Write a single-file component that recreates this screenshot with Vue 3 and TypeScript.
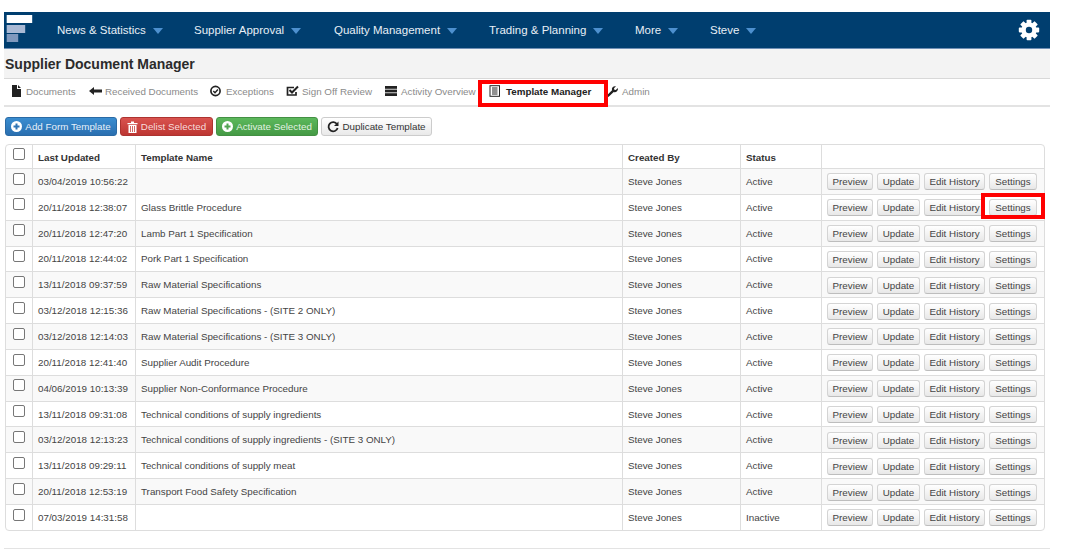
<script setup lang="ts">
const nav = [
  { label: 'News & Statistics', w: 137 },
  { label: 'Supplier Approval', w: 140 },
  { label: 'Quality Management', w: 155 },
  { label: 'Trading & Planning', w: 146 },
  { label: 'More', w: 75 },
  { label: 'Steve', w: 60 },
]
const tabs = [
  { id: 'doc', label: 'Documents', w: 79 },
  { id: 'back', label: 'Received Documents', w: 121 },
  { id: 'ok', label: 'Exceptions', w: 76 },
  { id: 'check', label: 'Sign Off Review', w: 99 },
  { id: 'server', label: 'Activity Overview', w: 104 },
  { id: 'list', label: 'Template Manager', w: 117, active: true },
  { id: 'wrench', label: 'Admin', w: 60 },
]
const rows = [
  ['03/04/2019 10:56:22', '', 'Active'],
  ['20/11/2018 12:38:07', 'Glass Brittle Procedure', 'Active'],
  ['20/11/2018 12:47:20', 'Lamb Part 1 Specification', 'Active'],
  ['20/11/2018 12:44:02', 'Pork Part 1 Specification', 'Active'],
  ['13/11/2018 09:37:59', 'Raw Material Specifications', 'Active'],
  ['03/12/2018 12:15:36', 'Raw Material Specifications - (SITE 2 ONLY)', 'Active'],
  ['03/12/2018 12:14:03', 'Raw Material Specifications - (SITE 3 ONLY)', 'Active'],
  ['20/11/2018 12:41:40', 'Supplier Audit Procedure', 'Active'],
  ['04/06/2019 10:13:39', 'Supplier Non-Conformance Procedure', 'Active'],
  ['13/11/2018 09:31:08', 'Technical conditions of supply ingredients', 'Active'],
  ['03/12/2018 12:13:23', 'Technical conditions of supply ingredients - (SITE 3 ONLY)', 'Active'],
  ['13/11/2018 09:29:11', 'Technical conditions of supply meat', 'Active'],
  ['20/11/2018 12:53:19', 'Transport Food Safety Specification', 'Active'],
  ['07/03/2019 14:31:58', '', 'Inactive'],
]
const actions = ['Preview', 'Update', 'Edit History', 'Settings']
const teeth = [0, 45, 90, 135, 180, 225, 270, 315]
</script>

<template>
  <div class="page">
    <header class="nav">
      <svg class="logo" width="28" height="30" viewBox="0 0 28 30">
        <rect x="1.700" y="3" width="25.500" height="8" fill="#ffffff" />
        <rect x="1.700" y="13" width="18.500" height="8" fill="#a9b9d4" />
        <rect x="1.700" y="22" width="11.500" height="8" fill="#7f98bd" />
      </svg>
      <div class="nav-items">
        <div v-for="n in nav" :key="n.label" class="nav-item" :style="{ width: n.w + 'px' }">
          <span>{{ n.label }}</span><i class="caret"></i>
        </div>
      </div>
      <svg class="gear" width="22" height="22" viewBox="0 0 22 22">
        <rect v-for="t in teeth" :key="t" x="8.600" y="0.800" width="4.800" height="5" rx="0.800" fill="#fff" :transform="`rotate(${t} 11 11)`" />
        <circle cx="11" cy="11" r="7.600" fill="#fff" />
        <circle cx="11" cy="11" r="3.200" fill="#003e6f" />
      </svg>
    </header>

    <div class="title-bar"><h1>Supplier Document Manager</h1></div>

    <nav class="tabs">
      <div v-for="t in tabs" :key="t.id" class="tab" :class="{ active: t.active }" :style="{ width: t.w + 'px' }">
        <svg class="tab-icon" width="13" height="12" viewBox="0 0 13 12">
          <template v-if="t.id === 'doc'">
            <path d="M2 0h5v4h4v8H2z M8 0l3 3H8z" fill="#222" />
          </template>
          <template v-else-if="t.id === 'back'">
            <path d="M0 6l5-4v2.500h8v3H5V10z" fill="#222" />
          </template>
          <template v-else-if="t.id === 'ok'">
            <circle cx="5.500" cy="6" r="4.600" fill="none" stroke="#222" stroke-width="1.700" />
            <path d="M3.300 6l1.700 1.700L7.900 4.600" fill="none" stroke="#222" stroke-width="1.500" />
          </template>
          <template v-else-if="t.id === 'check'">
            <path d="M10 7v3H1.500V2.500H8" fill="none" stroke="#222" stroke-width="1.700" />
            <path d="M3.500 5l2.500 2.500L12 1.500" fill="none" stroke="#222" stroke-width="2" />
          </template>
          <template v-else-if="t.id === 'server'">
            <rect x="0" y="1" width="12" height="2.800" fill="#222" />
            <rect x="0" y="4.600" width="12" height="2.800" fill="#222" />
            <rect x="0" y="8.200" width="12" height="2.800" fill="#222" />
          </template>
          <template v-else-if="t.id === 'list'">
            <rect x="1" y="0.700" width="9.500" height="10.600" fill="none" stroke="#222" />
            <path d="M3 3h5.500M3 5h5.500M3 7h5.500M3 9h5.500" stroke="#222" />
          </template>
          <template v-else>
            <path d="M0.800 10.500L6 5.300a3.200 3.200 0 0 1 4-4L8 3.200l.3 1.500 1.500.3 2-2a3.200 3.200 0 0 1-4.100 4L2.400 12z" fill="#222" />
          </template>
        </svg>
        <span>{{ t.label }}</span>
      </div>
      <div class="hl hl-tab"></div>
    </nav>

    <div class="toolbar">
      <button class="tb blue">
        <svg width="11" height="11" viewBox="0 0 11 11"><circle cx="5.500" cy="5.500" r="5.500" fill="#fff" /><path d="M5.500 2.500v6M2.500 5.500h6" stroke="#2e74b5" stroke-width="2" /></svg>
        Add Form Template
      </button>
      <button class="tb red">
        <svg width="11" height="12" viewBox="0 0 11 12"><path d="M0.500 2h10v1.300h-10zM4 0.500h3V2H4zM1.500 4h8v8h-8z" fill="#fff" /><path d="M3.500 5v6M5.500 5v6M7.500 5v6" stroke="#c9423f" stroke-width="0.800" /></svg>
        Delist Selected
      </button>
      <button class="tb green">
        <svg width="11" height="11" viewBox="0 0 11 11"><circle cx="5.500" cy="5.500" r="5.500" fill="#fff" /><path d="M5.500 2.500v6M2.500 5.500h6" stroke="#51a351" stroke-width="2" /></svg>
        Activate Selected
      </button>
      <button class="tb plain">
        <svg width="12" height="12" viewBox="0 0 12 12"><path d="M10 3.200A4.600 4.600 0 1 0 10.600 7" fill="none" stroke="#222" stroke-width="1.800" /><path d="M11.500 0.500v4.500H7z" fill="#222" /></svg>
        Duplicate Template
      </button>
    </div>

    <div class="table-wrap">
      <table>
        <colgroup>
          <col style="width: 26px" /><col style="width: 103px" /><col style="width: 487px" />
          <col style="width: 118px" /><col style="width: 81px" /><col />
        </colgroup>
        <thead>
          <tr>
            <th><span class="cb"></span></th>
            <th>Last Updated</th><th>Template Name</th><th>Created By</th><th>Status</th><th></th>
          </tr>
        </thead>
        <tbody>
          <tr v-for="r in rows" :key="r[0]">
            <td><span class="cb"></span></td>
            <td>{{ r[0] }}</td>
            <td>{{ r[1] }}</td>
            <td>Steve Jones</td>
            <td>{{ r[2] }}</td>
            <td class="acts"><div class="act-row"><button v-for="a in actions" :key="a" class="act">{{ a }}</button></div></td>
          </tr>
        </tbody>
      </table>
      <div class="hl hl-set"></div>
    </div>

    <div class="rule"></div>
  </div>
</template>

<style>
html, body { background: #ffffff; }
</style>

<style scoped>
.page {
  width: 1046px;
  margin-left: 4px;
  padding-top: 12px;
  font-family: "Liberation Sans", Arial, sans-serif;
  color: #333333;
}
.nav {
  height: 36px;
  background: #003e6f;
  border-bottom: 1px solid #6f8fb5;
  display: flex;
  align-items: center;
  position: relative;
}
.logo { flex: none; margin-left: 1px; align-self: flex-start; }
.nav-items { display: flex; margin-left: 24px; flex: 1; }
.nav-item { display: flex; align-items: center; font-size: 11.500px; color: #e8eff6; flex: none; }
.caret {
  width: 0; height: 0; margin-left: 7px; margin-top: 2px;
  border-left: 5px solid transparent; border-right: 5px solid transparent;
  border-top: 6px solid #4d90cf;
}
.gear { flex: none; margin-right: 10px; }
.title-bar {
  height: 29px;
  background: #f3f3f3;
  border-bottom: 1px solid #d8d8d8;
  display: flex;
  align-items: center;
  padding-left: 1px;
}
h1 { margin: 0; font-size: 14px; font-weight: bold; color: #2b2b2b; }
.tabs {
  height: 26px;
  box-sizing: content-box;
  display: flex;
  align-items: center;
  padding-left: 6px;
  border-bottom: 2px solid #e3e3e3;
  position: relative;
}
.tab { display: flex; align-items: center; flex: none; font-size: 9.800px; color: #8a8a8a; margin-top: -2px; }
.tab-icon { flex: none; margin-right: 3px; }
.tab.active { color: #222222; font-weight: bold; }
.tab.active .tab-icon { margin-right: 4px; }
.hl { position: absolute; border: 4px solid #ff0000; box-sizing: border-box; pointer-events: none; }
.hl-tab { left: 474px; top: 1px; width: 130px; height: 27px; }
.toolbar { display: flex; gap: 3px; margin: 10px 0 0 1px; height: 19px; }
.tb {
  display: flex; align-items: center; justify-content: center; gap: 3px;
  height: 19px; padding: 0; border-radius: 3px; font: 9.800px "Liberation Sans", Arial, sans-serif;
  border: 1px solid; box-sizing: border-box; color: #fff;
}
.tb:nth-child(1) { width: 112px; }
.tb:nth-child(2) { width: 93px; }
.tb:nth-child(3) { width: 102px; }
.tb:nth-child(4) { width: 111px; }
.blue { background: linear-gradient(#3a8dd0, #2a6fb0); border-color: #2a6aa5; color: #e6f0fa; }
.red { background: linear-gradient(#d9534f, #bd3632); border-color: #ad3330; color: #f8dcdb; }
.green { background: linear-gradient(#5cb85c, #459a45); border-color: #439043; color: #e2f3e2; }
.plain { background: linear-gradient(#ffffff, #e9e9e9); border-color: #cccccc; color: #333333; }
.table-wrap { position: relative; margin: 8px 5px 0 1px; }
table {
  width: 100%;
  table-layout: fixed;
  border-collapse: separate;
  border-spacing: 0;
  border: 1px solid #dddddd;
  border-radius: 4px;
  font-size: 9.800px;
}
th { height: 23px; text-align: left; font-weight: bold; color: #333; padding: 1px 5px 0; box-sizing: border-box; }
td { height: 25.850px; padding: 0 5px; box-sizing: border-box; color: #444; border-top: 1px solid #dddddd; }
th + th, td + td { border-left: 1px solid #dddddd; }
th:first-child, td:first-child { padding: 0; text-align: center; }
tbody tr:nth-child(odd) { background: #f9f9f9; }
.cb {
  display: inline-block; width: 12px; height: 12px; box-sizing: border-box;
  border: 1px solid #777777; border-radius: 2px; background: #fff; vertical-align: middle; position: relative; top: -3px;
}
.acts { padding: 0 0 0 5px; }
.act-row { display: flex; gap: 4px; align-items: center; margin-top: 1px; }
.act {
  flex: none; height: 17px; padding: 0; box-sizing: border-box;
  background: linear-gradient(#ffffff, #e8e8e8);
  border: 1px solid #d4d4d4; border-bottom-color: #bdbdbd; border-radius: 3px;
  font: 9.800px "Liberation Sans", Arial, sans-serif; color: #444;
}
.act:nth-child(1) { width: 46px; }
.act:nth-child(2) { width: 43px; }
.act:nth-child(3) { width: 61px; }
.act:nth-child(4) { width: 48px; }
.hl-set { left: 976px; top: 49px; width: 64px; height: 26px; }
.rule { height: 1px; background: #e3e3e3; margin-top: 17px; }
</style>
